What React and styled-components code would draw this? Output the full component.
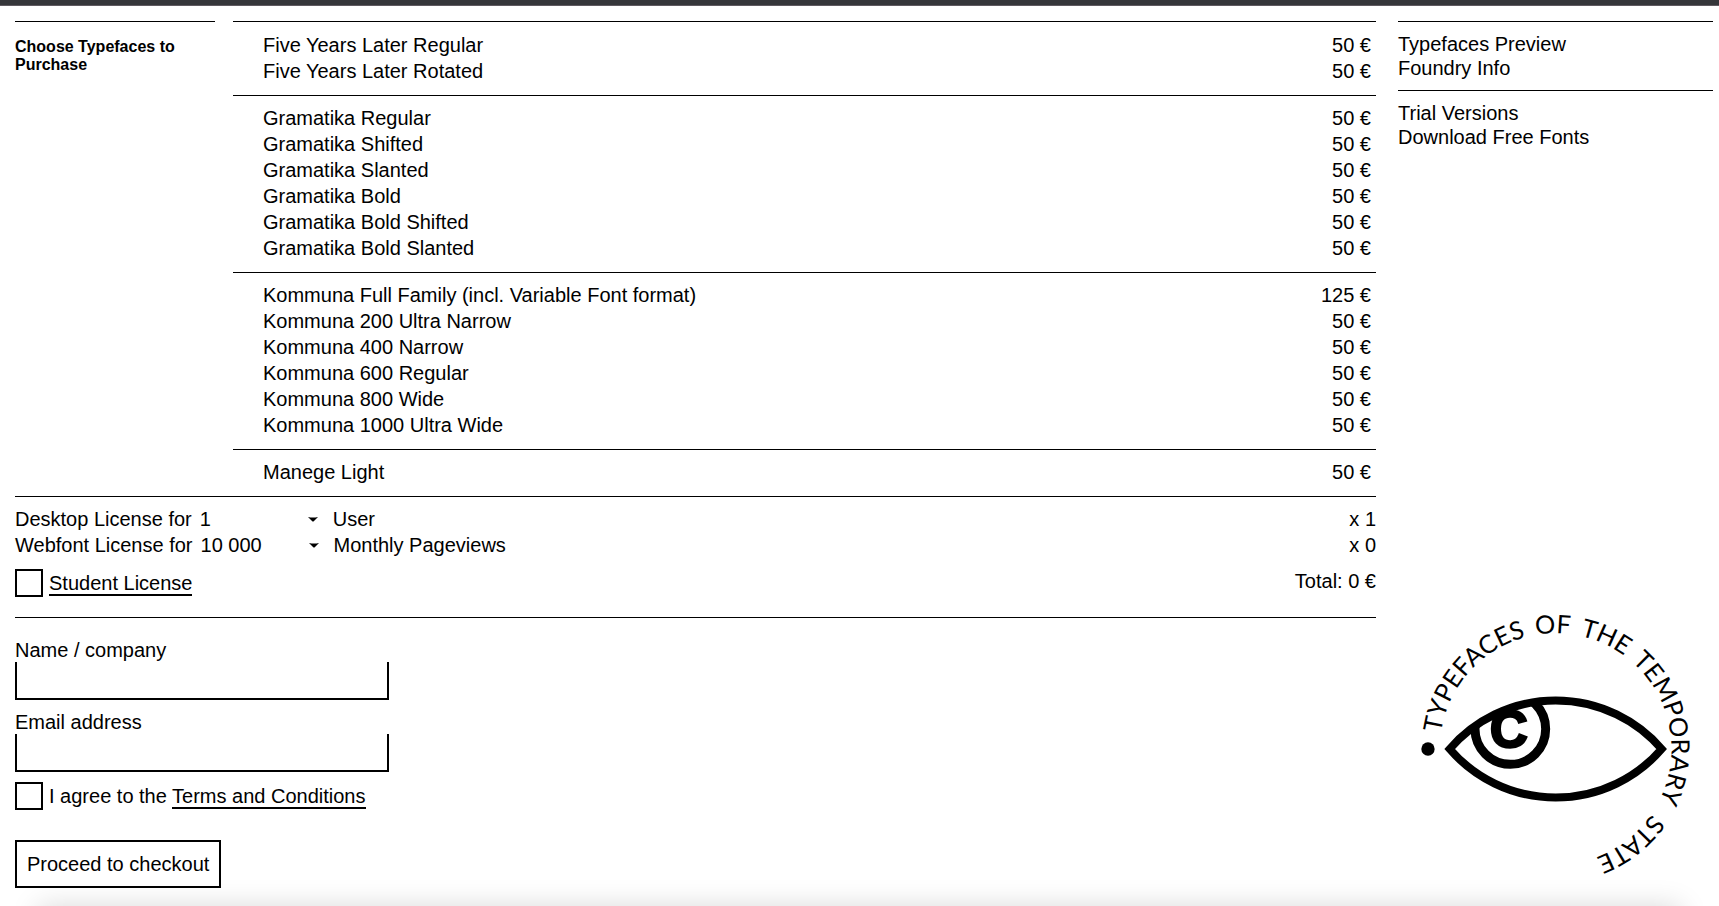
import React from "react";
import styled, { createGlobalStyle } from "styled-components";

const GlobalStyle = createGlobalStyle`
  * { box-sizing: border-box; }
  body {
    margin: 0;
    background: #fff;
    color: #000;
    font: 20px/24px "Liberation Sans", Arial, Helvetica, sans-serif;
  }
  input, select, button { font: inherit; color: inherit; }
`;

const TopBar = styled.div`
  height: 6px;
  background: #35363a;
  border-bottom: 1px solid #5f5a60;
`;

const Page = styled.div`
  display: grid;
  grid-template-columns: minmax(0, 1361fr) minmax(0, 315fr);
  gap: 22px;
  padding: 15px 6px 18px 15px;
`;

const Catalogue = styled.section`
  display: grid;
  grid-template-columns: minmax(0, 200fr) minmax(0, 1143fr);
  gap: 18px;
`;

const Heading = styled.h1`
  margin: 0;
  padding-top: 16px;
  border-top: 1px solid #000;
  font-size: 16px;
  line-height: 18px;
`;

const Family = styled.div`
  padding: 9px 5px 11px 30px;
  border-top: 1px solid #000;
  &:first-child { padding-top: 10px; }
`;

const PriceTable = styled.table`
  width: 100%;
  border-collapse: collapse;
  line-height: 26px;
  td, th {
    padding: 0;
    font-weight: normal;
    text-align: left;
  }
  td { text-align: right; }
`;

const Licenses = styled.section`
  padding: 9px 0 20px;
  border-top: 1px solid #000;
  border-bottom: 1px solid #000;
`;

const LicenseRow = styled.div`
  display: flex;
  line-height: 26px;
`;

const Factor = styled.span`
  margin-left: auto;
`;

const SelectBox = styled.span`
  position: relative;
  margin: 0 15px 0 8px;
  svg {
    position: absolute;
    right: 0;
    top: 11px;
    pointer-events: none;
  }
`;

const Select = styled.select`
  display: block;
  width: 118px;
  height: 26px;
  padding: 0;
  border: 0;
  background: none;
  line-height: 26px;
  appearance: none;
`;

const TotalRow = styled.div`
  display: flex;
  justify-content: space-between;
  padding-top: 11px;
`;

const Check = styled.div`
  display: flex;
  align-items: center;
  gap: 6px;
`;

const CheckBox = styled.input`
  appearance: none;
  width: 28px;
  height: 28px;
  margin: 0;
  border: 2px solid #000;
  &:checked { background: #000; box-shadow: inset 0 0 0 4px #fff; }
`;

const TextLink = styled.a`
  color: inherit;
  text-decoration: none;
  border-bottom: 2px solid #000;
`;

const Form = styled.form`
  display: flex;
  flex-direction: column;
  align-items: flex-start;
  gap: 10px;
  padding-top: 20px;
`;

const Field = styled.label`
  display: block;
  width: 374px;
  max-width: 100%;
`;

const TextInput = styled.input`
  display: block;
  width: 100%;
  height: 38px;
  padding: 0 8px;
  border: solid #000;
  border-width: 0 2px 2px;
  border-radius: 0;
  background: none;
`;

const Submit = styled.button`
  height: 48px;
  margin-top: 20px;
  padding: 0 10px;
  border: 2px solid #000;
  background: #fff;
  cursor: pointer;
`;

const Side = styled.aside`
  display: flex;
  flex-direction: column;
`;

const Nav = styled.nav`
  display: flex;
  flex-direction: column;
  align-items: flex-start;
  padding: 10px 0;
  border-top: 1px solid #000;
`;

const NavLink = styled.a`
  color: inherit;
  text-decoration: none;
`;

const Emblem = styled.svg`
  width: 274px;
  max-width: 100%;
  height: auto;
  margin: auto auto 12px;
  overflow: visible;
`;

const BottomShade = styled.div`
  position: fixed;
  top: 100%;
  left: 38px;
  right: 38px;
  height: 60px;
  box-shadow: 0 0 28px rgba(0, 0, 0, 0.15);
  pointer-events: none;
`;

const families = [
  [["Five Years Later Regular", 50], ["Five Years Later Rotated", 50]],
  [
    ["Gramatika Regular", 50],
    ["Gramatika Shifted", 50],
    ["Gramatika Slanted", 50],
    ["Gramatika Bold", 50],
    ["Gramatika Bold Shifted", 50],
    ["Gramatika Bold Slanted", 50],
  ],
  [
    ["Kommuna Full Family (incl. Variable Font format)", 125],
    ["Kommuna 200 Ultra Narrow", 50],
    ["Kommuna 400 Narrow", 50],
    ["Kommuna 600 Regular", 50],
    ["Kommuna 800 Wide", 50],
    ["Kommuna 1000 Ultra Wide", 50],
  ],
  [["Manege Light", 50]],
];

const licenses = [
  { id: "desktop", label: "Desktop License for", value: "1", unit: "User", factor: 1 },
  { id: "webfont", label: "Webfont License for", value: "10 000", unit: "Monthly Pageviews", factor: 0 },
];

const menus = [
  ["Typefaces Preview", "Foundry Info"],
  ["Trial Versions", "Download Free Fonts"],
];

// Ring text: each word starts at its own angle, clockwise from the left of the circle.
const RADIUS = 347;
const words = [
  ["TYPEFACES", 8],
  ["OF", 80],
  ["THE", 102],
  ["TEMPORARY", 131],
  ["STATE", 214],
];

const EYE = "M177 446A420 420 0 0 1 813 446A420 420 0 0 1 177 446Z";

function Logo() {
  return (
    <Emblem viewBox="85 35 822 792" role="img" aria-label="Typefaces of the Temporary State">
      <defs>
        <path id="ring" d="M148 446A347 347 0 0 1 842 446A347 347 0 0 1 148 446" />
        <clipPath id="eye">
          <path d={EYE} />
        </clipPath>
      </defs>
      <circle cx="112" cy="446" r="20" />
      <g clipPath="url(#eye)">
        <circle cx="359" cy="386" r="106" fill="none" stroke="#000" strokeWidth="27" />
        <text
          x="354"
          y="441"
          textAnchor="middle"
          fontFamily="Liberation Sans, Arial, sans-serif"
          fontWeight="700"
          fontSize="156"
          stroke="#000"
          strokeWidth="8"
        >
          C
        </text>
      </g>
      <path d={EYE} fill="none" stroke="#000" strokeWidth="24" />
      {words.map(([word, angle]) => (
        <text key={word} fontFamily="Lato, sans-serif" fontSize="76">
          <textPath href="#ring" startOffset={Math.round((angle * Math.PI * RADIUS) / 180)}>
            {word}
          </textPath>
        </text>
      ))}
    </Emblem>
  );
}

function License({ id, label, value, unit, factor }) {
  return (
    <LicenseRow>
      <label htmlFor={id}>{label}</label>
      <SelectBox>
        <Select id={id} defaultValue={value}>
          <option>{value}</option>
        </Select>
        <svg width="10" height="5" viewBox="0 0 10 5" aria-hidden="true">
          <path d="M0 0Q5 1 10 0L6 4Q5 5 4 4Z" />
        </svg>
      </SelectBox>
      <span>{unit}</span>
      <Factor>x {factor}</Factor>
    </LicenseRow>
  );
}

export default function App() {
  return (
    <>
      <GlobalStyle />
      <TopBar />
      <Page>
        <main>
          <Catalogue>
            <Heading>Choose Typefaces to Purchase</Heading>
            <div>
              {families.map((fonts) => (
                <Family key={fonts[0][0]}>
                  <PriceTable>
                    <tbody>
                      {fonts.map(([name, price]) => (
                        <tr key={name}>
                          <th scope="row">{name}</th>
                          <td>{price} €</td>
                        </tr>
                      ))}
                    </tbody>
                  </PriceTable>
                </Family>
              ))}
            </div>
          </Catalogue>
          <Licenses>
            {licenses.map((license) => (
              <License key={license.id} {...license} />
            ))}
            <TotalRow>
              <Check>
                <CheckBox type="checkbox" id="student" />
                <label htmlFor="student">
                  <TextLink href="#student">Student License</TextLink>
                </label>
              </Check>
              <span>Total: 0 €</span>
            </TotalRow>
          </Licenses>
          <Form onSubmit={(event) => event.preventDefault()}>
            <Field>
              Name / company
              <TextInput type="text" name="name" />
            </Field>
            <Field>
              Email address
              <TextInput type="email" name="email" />
            </Field>
            <Check>
              <CheckBox type="checkbox" id="terms" />
              <label htmlFor="terms">
                I agree to the <TextLink href="#terms">Terms and Conditions</TextLink>
              </label>
            </Check>
            <Submit type="submit">Proceed to checkout</Submit>
          </Form>
        </main>
        <Side>
          {menus.map((links) => (
            <Nav key={links[0]} aria-label={links[0]}>
              {links.map((name) => (
                <NavLink key={name} href="#">
                  {name}
                </NavLink>
              ))}
            </Nav>
          ))}
          <Logo />
        </Side>
      </Page>
      <BottomShade />
    </>
  );
}
